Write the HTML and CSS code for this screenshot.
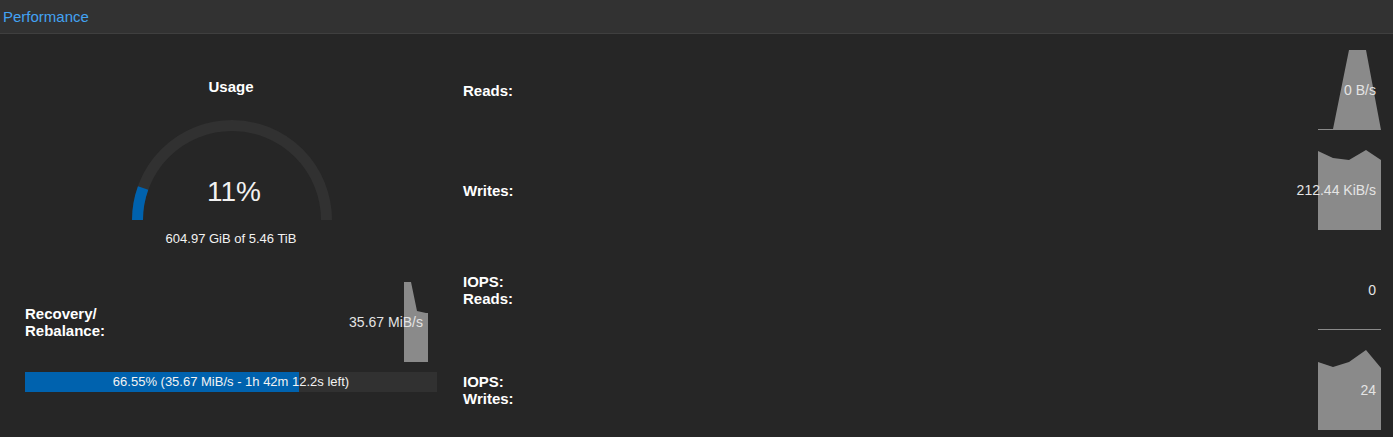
FILE: index.html
```html
<!DOCTYPE html>
<html>
<head>
<meta charset="utf-8">
<link rel="stylesheet" href="styles.css">
</head>
<body>
<div class="panel">
  <div class="panel-header">Performance</div>
  <div class="panel-body">
    <div class="left">
      <div class="gauge-block">
        <div class="gauge-title">Usage</div>
        <div class="gauge">
          <svg class="gauge-svg" width="202" height="100" viewBox="0 0 202 100">
            <path d="M 6.5 100 A 94.5 94.5 0 0 1 195.5 100" fill="none" stroke="#313131" stroke-width="11"/>
            <path d="M 6.5 100 A 94.5 94.5 0 0 1 12.1 68.0" fill="none" stroke="#0062ae" stroke-width="11"/>
          </svg>
          <div class="gauge-value">11%</div>
        </div>
        <div class="gauge-caption">604.97 GiB of 5.46 TiB</div>
      </div>
      <div class="recovery-row">
        <div class="label">Recovery/<br>Rebalance:</div>
        <div class="spark-wrap">
          <svg class="spark" width="24" height="80" viewBox="0 0 24 80">
            <polygon points="0,0 7,0 13,29 22,31 24,31 24,80 0,80" fill="#8a8a8a"/>
          </svg>
          <div class="spark-value">35.67 MiB/s</div>
        </div>
      </div>
      <div class="progress">
        <div class="progress-fill" style="width: 66.55%"></div>
        <div class="progress-text">66.55% (35.67 MiB/s - 1h 42m 12.2s left)</div>
      </div>
    </div>
    <div class="right">
      <div class="metric-row">
        <div class="label">Reads:</div>
        <div class="spark-wrap">
          <svg class="spark" width="63" height="80" viewBox="0 0 63 80">
            <polygon points="0,80 0,79 15,79 31,0 48,0 63,80" fill="#8a8a8a"/>
          </svg>
          <div class="spark-value">0 B/s</div>
        </div>
      </div>
      <div class="metric-row">
        <div class="label">Writes:</div>
        <div class="spark-wrap">
          <svg class="spark" width="63" height="80" viewBox="0 0 63 80">
            <polygon points="0,1 15,8 31,10 48,0 63,10 63,80 0,80" fill="#8a8a8a"/>
          </svg>
          <div class="spark-value">212.44 KiB/s</div>
        </div>
      </div>
      <div class="metric-row">
        <div class="label">IOPS:<br>Reads:</div>
        <div class="spark-wrap">
          <svg class="spark" width="63" height="80" viewBox="0 0 63 80">
            <rect x="0" y="79" width="63" height="1" fill="#8a8a8a"/>
          </svg>
          <div class="spark-value">0</div>
        </div>
      </div>
      <div class="metric-row">
        <div class="label">IOPS:<br>Writes:</div>
        <div class="spark-wrap">
          <svg class="spark" width="63" height="80" viewBox="0 0 63 80">
            <polygon points="0,12 15,17 31,12 48,0 63,18 63,80 0,80" fill="#8a8a8a"/>
          </svg>
          <div class="spark-value">24</div>
        </div>
      </div>
    </div>
  </div>
</div>
</body>
</html>
```

FILE: styles.css
```css
html, body {
  margin: 0;
  padding: 0;
  background: #262626;
}

body {
  font-family: "Liberation Sans", Arial, sans-serif;
  color: #ffffff;
  width: 1393px;
  height: 437px;
  overflow: hidden;
}

.panel-header {
  height: 34px;
  box-sizing: border-box;
  background: #323232;
  border-bottom: 1px solid #3f3f3f;
  color: #43a3f3;
  font-size: 15px;
  line-height: 33px;
  padding-left: 3px;
}

.panel-body {
  display: flex;
  padding-top: 6px;
}

.left {
  width: 462px;
  box-sizing: border-box;
  padding: 0 25px;
  display: flex;
  flex-direction: column;
}

.gauge-block {
  display: flex;
  flex-direction: column;
  align-items: center;
  padding-top: 38px;
}

.gauge-title {
  font-weight: bold;
  font-size: 15px;
  line-height: 18px;
}

.gauge {
  display: grid;
  margin-top: 24px;
  margin-left: 1px;
}

.gauge-svg {
  grid-area: 1 / 1;
  display: block;
}

.gauge-value {
  grid-area: 1 / 1;
  align-self: end;
  justify-self: center;
  font-size: 28px;
  line-height: 32px;
  margin-bottom: 12px;
  margin-left: 5px;
  color: #f2f2f2;
}

.gauge-caption {
  margin-top: 11px;
  font-size: 13px;
  line-height: 16px;
  color: #f2f2f2;
}

.label {
  font-weight: bold;
  font-size: 15px;
  line-height: 17px;
  color: #ffffff;
}

.recovery-row {
  display: flex;
  align-items: center;
  justify-content: space-between;
  margin-top: 35px;
  height: 80px;
  padding-right: 9px;
}

.spark-wrap {
  position: relative;
  height: 80px;
}

.spark {
  display: block;
}

.spark-value {
  position: absolute;
  right: 5px;
  top: 50%;
  transform: translateY(-50%);
  white-space: nowrap;
  font-size: 14px;
  line-height: 16px;
  color: #e4e4e4;
}

.progress {
  display: grid;
  margin-top: 10px;
  height: 20px;
  background: #313131;
}

.progress-fill {
  grid-area: 1 / 1;
  background: #0062ae;
  height: 20px;
}

.progress-text {
  grid-area: 1 / 1;
  justify-self: center;
  align-self: center;
  font-size: 13px;
  line-height: 16px;
  color: #f2f2f2;
}

.right {
  flex: 1;
  display: flex;
  flex-direction: column;
  padding-left: 1px;
  padding-right: 12px;
}

.metric-row {
  height: 100px;
  display: flex;
  align-items: center;
  justify-content: space-between;
}
```
